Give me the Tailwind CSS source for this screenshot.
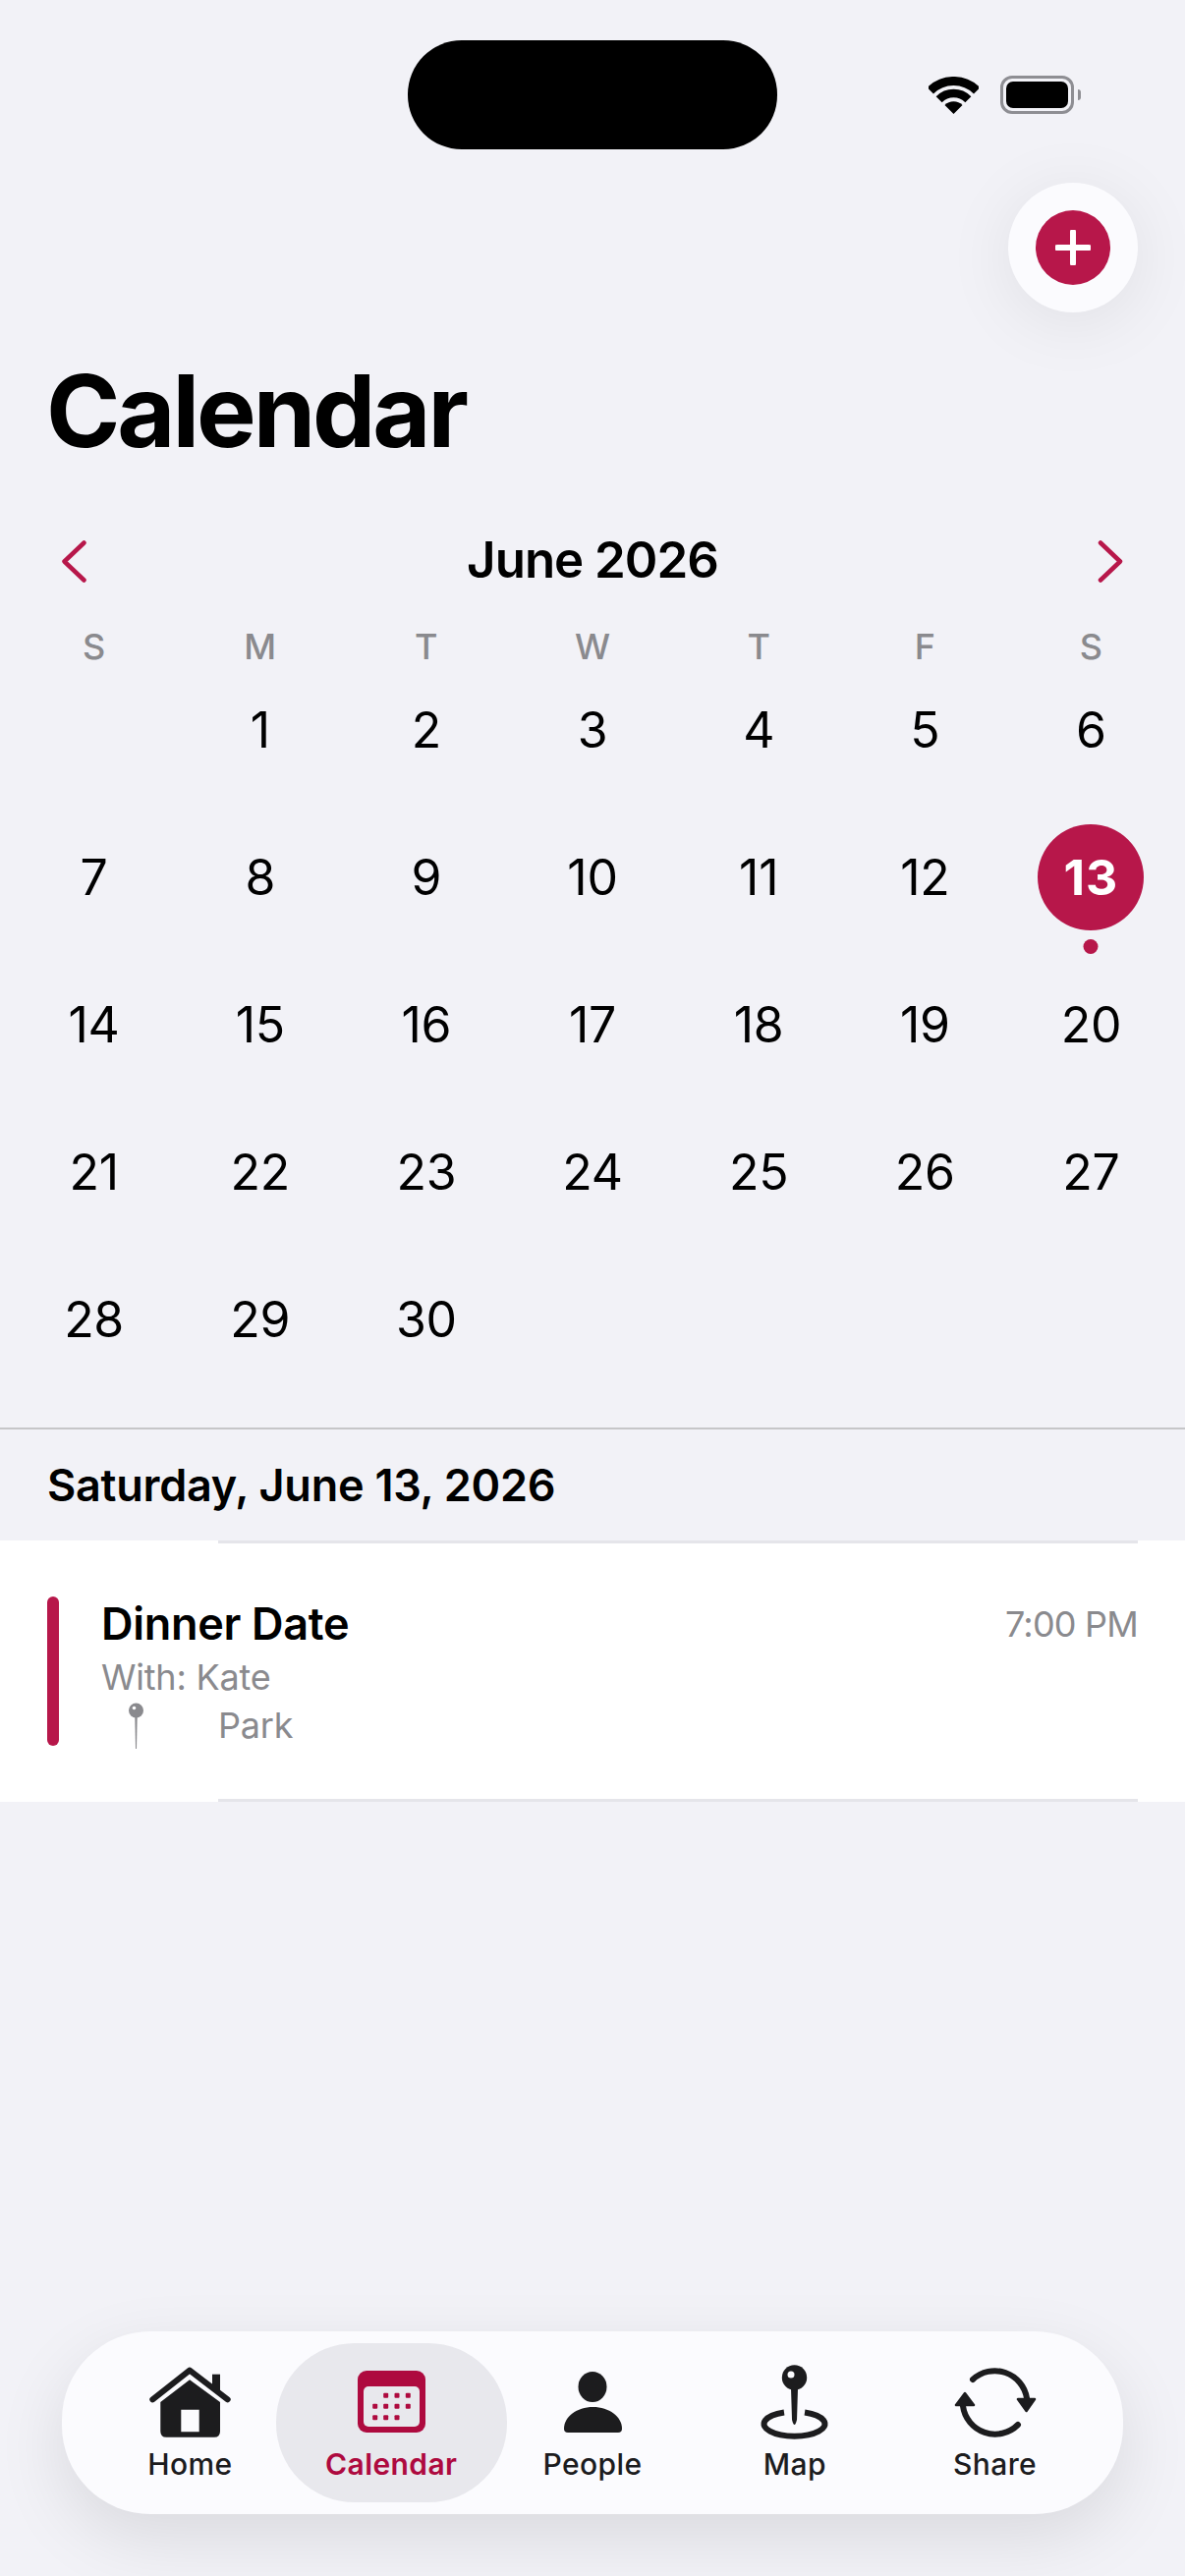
<!DOCTYPE html>
<html lang="en">
<head>
  <meta charset="UTF-8" />
  <meta name="viewport" content="width=device-width, initial-scale=1.0"/>
  <title>Calendar</title>
  <script src="https://cdn.jsdelivr.net/npm/@tailwindcss/browser@4"></script>
</head>
<body class="bg-[#f2f2f7] text-black font-['Inter',sans-serif] flex flex-col w-[1206px] h-[2622px] overflow-hidden">

  <!-- Status bar -->
  <div class="flex items-center pl-[415px] pt-[41px]">
    <div class="w-[376px] h-[111px] bg-black rounded-[55px]"></div>
    <svg class="ml-[154px] w-[51px] h-[38px]" viewBox="0 0 50 38">
      <path d="M1.3 14.3A33.5 33.5 0 0 1 48.7 14.3" fill="none" stroke="#000" stroke-width="9"/>
      <path d="M10.15 23.15A21 21 0 0 1 39.85 23.15" fill="none" stroke="#000" stroke-width="8.5"/>
      <path d="M25 38L16 29A12.7 12.7 0 0 1 34 29Z" fill="#000"/>
    </svg>
    <div class="ml-[22px] flex items-center">
      <div class="w-[75px] h-[39px] border-[3px] border-[#8e8e93] rounded-[12px] p-[3px]">
        <div class="w-full h-full bg-black rounded-[7px]"></div>
      </div>
      <div class="ml-[4px] w-[3px] h-[11px] bg-[#8e8e93] rounded-r-full"></div>
    </div>
  </div>

  <!-- Add button -->
  <div class="self-end mr-[48px] mt-[34px] w-[132px] h-[132px] rounded-full bg-[#fbfbfe] shadow-[0_10px_70px_rgba(0,0,0,0.08)] flex items-center justify-center">
    <div class="w-[76px] h-[76px] rounded-full bg-[#b7174a] flex items-center justify-center">
      <svg class="w-[36px] h-[36px]" viewBox="0 0 36 36">
        <path d="M18 2V34M2 18H34" stroke="#fff" stroke-width="6" stroke-linecap="round"/>
      </svg>
    </div>
  </div>

  <h1 class="ml-[47px] mt-[50px] h-[100px] text-[102px] leading-[100px] font-bold tracking-[-3.1px]">Calendar</h1>

  <!-- Month header -->
  <div class="mt-[62px] h-[80px] px-[62px] flex items-center justify-between">
    <svg class="w-[28px] h-[46px]" viewBox="0 0 28 46">
      <path d="M23.5 5.5L3.5 24.5L23.5 43.5" fill="none" stroke="#b7174a" stroke-width="4.5" stroke-linecap="round" stroke-linejoin="round"/>
    </svg>
    <div class="text-[51px] font-semibold tracking-[-1px]">June 2026</div>
    <svg class="w-[28px] h-[46px]" viewBox="0 0 28 46">
      <path d="M4 5.5L24 24.5L4 43.5" fill="none" stroke="#b7174a" stroke-width="4.5" stroke-linecap="round" stroke-linejoin="round"/>
    </svg>
  </div>

  <!-- Weekdays -->
  <div class="mt-[28px] h-[40px] px-[11px] grid grid-cols-7 text-center text-[36px] leading-[40px] font-medium text-[#8a8a8e]">
    <div>S</div><div>M</div><div>T</div><div>W</div><div>T</div><div>F</div><div>S</div>
  </div>

  <!-- Days -->
  <div class="px-[11px] grid grid-cols-7 gap-y-5 text-[50px] text-center tracking-[-0.3px]">
    <div class="h-[130px]"></div>
    <div class="h-[130px] flex items-center justify-center">1</div>
    <div class="h-[130px] flex items-center justify-center">2</div>
    <div class="h-[130px] flex items-center justify-center">3</div>
    <div class="h-[130px] flex items-center justify-center">4</div>
    <div class="h-[130px] flex items-center justify-center">5</div>
    <div class="h-[130px] flex items-center justify-center">6</div>
    <div class="h-[130px] flex items-center justify-center">7</div>
    <div class="h-[130px] flex items-center justify-center">8</div>
    <div class="h-[130px] flex items-center justify-center">9</div>
    <div class="h-[130px] flex items-center justify-center">10</div>
    <div class="h-[130px] flex items-center justify-center">11</div>
    <div class="h-[130px] flex items-center justify-center">12</div>
    <div class="relative h-[130px] flex items-center justify-center">
      <div class="w-[108px] h-[108px] rounded-full bg-[#b7174a] text-white font-bold tracking-[1px] flex items-center justify-center">13</div>
      <div class="absolute left-1/2 -translate-x-1/2 top-[128px] w-[15px] h-[15px] rounded-full bg-[#b7174a]"></div>
    </div>
    <div class="h-[130px] flex items-center justify-center">14</div>
    <div class="h-[130px] flex items-center justify-center">15</div>
    <div class="h-[130px] flex items-center justify-center">16</div>
    <div class="h-[130px] flex items-center justify-center">17</div>
    <div class="h-[130px] flex items-center justify-center">18</div>
    <div class="h-[130px] flex items-center justify-center">19</div>
    <div class="h-[130px] flex items-center justify-center">20</div>
    <div class="h-[130px] flex items-center justify-center">21</div>
    <div class="h-[130px] flex items-center justify-center">22</div>
    <div class="h-[130px] flex items-center justify-center">23</div>
    <div class="h-[130px] flex items-center justify-center">24</div>
    <div class="h-[130px] flex items-center justify-center">25</div>
    <div class="h-[130px] flex items-center justify-center">26</div>
    <div class="h-[130px] flex items-center justify-center">27</div>
    <div class="h-[130px] flex items-center justify-center">28</div>
    <div class="h-[130px] flex items-center justify-center">29</div>
    <div class="h-[130px] flex items-center justify-center">30</div>
  </div>

  <!-- Selected day -->
  <div class="mt-[45px] border-t-2 border-[#c6c6c8] h-[115px] pl-[48px] flex items-center text-[45px] font-semibold tracking-[-0.25px]">Saturday, June 13, 2026</div>

  <!-- Event list -->
  <div class="bg-white h-[266px] flex flex-col">
    <div class="ml-[222px] mr-[48px] h-[3px] bg-[#e5e5ea]"></div>
    <div class="flex-1 flex pl-[48px] pr-[48px] pt-[54px]">
      <div class="w-[12px] h-[152px] rounded-[6px] bg-[#b7174a]"></div>
      <div class="ml-[43px] flex-1">
        <div class="h-[56px] flex items-center justify-between">
          <span class="text-[45px] font-semibold tracking-[-0.3px]">Dinner Date</span>
          <span class="text-[36px] text-[#8a8a8e] tracking-[-0.8px]">7:00 PM</span>
        </div>
        <div class="text-[36px] leading-[52px] text-[#8a8a8e] tracking-[-0.2px]">With: Kate</div>
        <div class="h-[46px] flex items-center text-[36px] text-[#8a8a8e] tracking-[-0.2px]">
          <svg class="ml-[28px] w-[15px] h-[47px]" viewBox="0 0 15 47">
            <circle cx="7.5" cy="8" r="7.5" fill="#8a8a8e"/>
            <circle cx="5.5" cy="5.5" r="1.8" fill="#fff"/>
            <path d="M6.3 14H8.7L8 47H7Z" fill="#8a8a8e"/>
          </svg>
          <span class="ml-[76px]">Park</span>
        </div>
      </div>
    </div>
    <div class="ml-[222px] mr-[48px] h-[3px] bg-[#e5e5ea]"></div>
  </div>

  <!-- Tab bar -->
  <div class="mt-auto mb-[63px] mx-[63px] h-[186px] rounded-[90px] bg-[#fbfbfe] shadow-[0_24px_70px_rgba(0,0,0,0.1)] px-[28px] grid grid-cols-5 text-[30px] font-medium tracking-[0.4px] text-[#1c1c1e]">
    <div class="flex flex-col items-center pt-[32px]">
      <svg class="w-[96px] h-[80px]" viewBox="0 0 96 80">
        <path d="M10.3 37.3L48 7.7L86.7 37.3" fill="none" stroke="#1c1c1e" stroke-width="6" stroke-linecap="round" stroke-linejoin="round"/>
        <path d="M71 11.7H79V28H71Z" fill="#1c1c1e"/>
        <path fill-rule="evenodd" fill="#1c1c1e" d="M48 17.3L79 40V69.7Q79 75.7 73 75.7H24.3Q18.3 75.7 18.3 69.7V40ZM39.3 47.7V70.3H57.7V47.7Z"/>
      </svg>
      <span class="leading-[36px] mt-[5px]">Home</span>
    </div>
    <div class="relative flex flex-col items-center pt-[32px] text-[#ae0a3f] font-semibold">
      <div class="absolute -inset-x-[15px] top-[12px] bottom-[12px] rounded-[80px] bg-[#e8e8ed]"></div>
      <svg class="relative w-[96px] h-[80px]" viewBox="0 0 96 80">
        <rect x="14" y="8" width="69" height="63" rx="9" fill="#ae0a3f"/>
        <rect x="20" y="24" width="57" height="41" rx="5" fill="#e8e8ed"/>
        <g fill="#ae0a3f">
          <rect x="40.2" y="30.8" width="5" height="5" rx="1"/><rect x="51.5" y="30.8" width="5" height="5" rx="1"/><rect x="62.8" y="30.8" width="5" height="5" rx="1"/>
          <rect x="29.2" y="41.8" width="5" height="5" rx="1"/><rect x="40.2" y="41.8" width="5" height="5" rx="1"/><rect x="51.5" y="41.8" width="5" height="5" rx="1"/><rect x="62.8" y="41.8" width="5" height="5" rx="1"/>
          <rect x="29.2" y="53.2" width="5" height="5" rx="1"/><rect x="40.2" y="53.2" width="5" height="5" rx="1"/><rect x="51.5" y="53.2" width="5" height="5" rx="1"/>
        </g>
      </svg>
      <span class="relative leading-[36px] mt-[5px]">Calendar</span>
    </div>
    <div class="flex flex-col items-center pt-[32px]">
      <svg class="w-[96px] h-[80px]" viewBox="0 0 96 80">
        <ellipse cx="48" cy="24.5" rx="14.5" ry="15.5" fill="#1c1c1e"/>
        <path d="M19 67C19 55 32 45 48.5 45C65 45 78 55 78 67Q78 71 74 71H23Q19 71 19 67Z" fill="#1c1c1e"/>
      </svg>
      <span class="leading-[36px] mt-[5px]">People</span>
    </div>
    <div class="flex flex-col items-center pt-[32px]">
      <svg class="w-[96px] h-[80px]" viewBox="0 0 96 80">
        <path d="M38 50.5A31 12.5 0 1 0 59 50.5" fill="none" stroke="#1c1c1e" stroke-width="6"/>
        <path d="M45 26H52L51 58Q48.5 68 46 58Z" fill="#1c1c1e"/>
        <circle cx="48.5" cy="15" r="12.7" fill="#1c1c1e"/>
        <circle cx="45" cy="12" r="3.5" fill="#fbfbfe"/>
      </svg>
      <span class="leading-[36px] mt-[5px] ml-[2px]">Map</span>
    </div>
    <div class="flex flex-col items-center pt-[32px]">
      <svg class="w-[96px] h-[80px]" viewBox="0 0 96 80">
        <path d="M25 17A33 33 0 0 1 80 36M15 44A33 33 0 0 0 71 63" fill="none" stroke="#1c1c1e" stroke-width="6" stroke-linecap="round"/>
        <path d="M71 37H88L79.6 49ZM17 31L8 43H26Z" fill="#1c1c1e" stroke="#1c1c1e" stroke-width="2.5" stroke-linejoin="round"/>
      </svg>
      <span class="leading-[36px] mt-[5px]">Share</span>
    </div>
  </div>

</body>
</html>
